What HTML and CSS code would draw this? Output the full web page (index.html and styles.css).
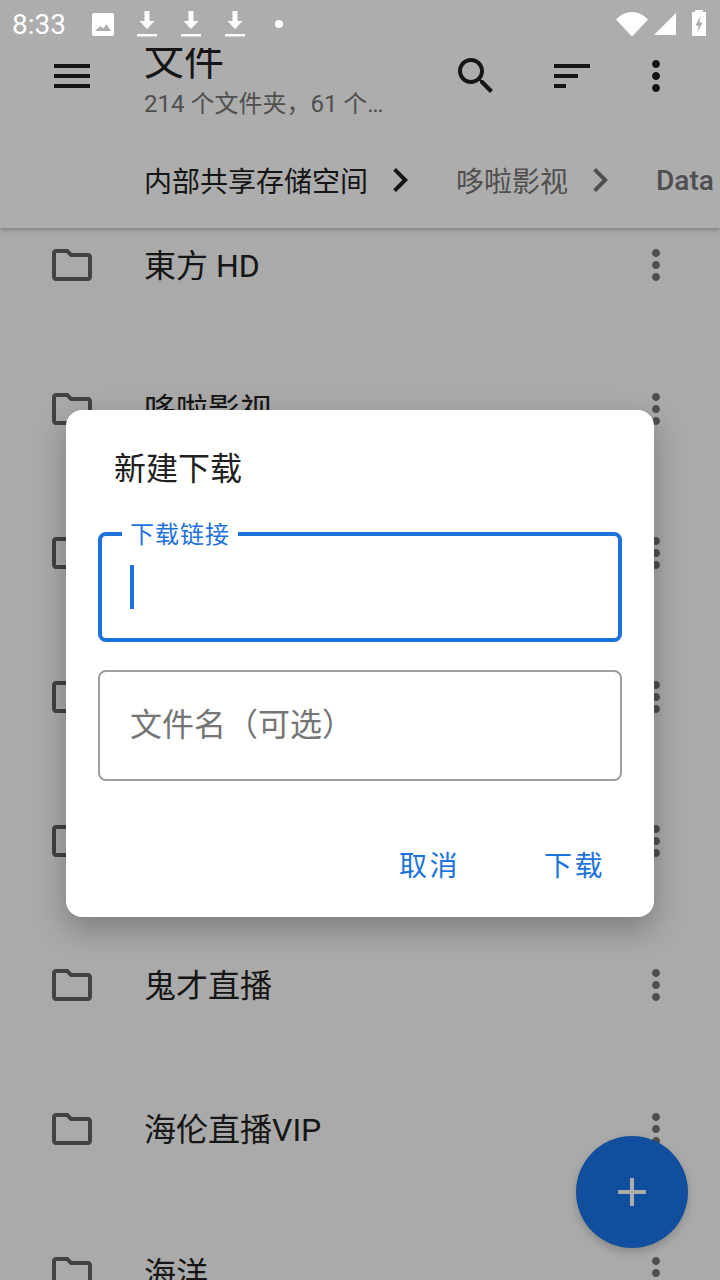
FILE: index.html
```html
<!DOCTYPE html>
<html lang="zh-CN">
<head>
    <meta charset="UTF-8">
    <meta name="viewport" content="width=device-width, initial-scale=1.0">
    <title>文件</title>
    <link rel="stylesheet" href="styles.css">
</head>
<body>
    <div class="phone">
        <div class="status-bar">
            <span class="time">8:33</span>
            <svg class="stat-image" width="22" height="23" viewBox="0 0 22 23"><path fill-rule="evenodd" fill="#fff" d="M2 0h18a2 2 0 0 1 2 2v19a2 2 0 0 1-2 2H2a2 2 0 0 1-2-2V2a2 2 0 0 1 2-2zM3 18h16l-4.500-6.500-3.500 4-2.500-2.500z"/></svg>
            <svg class="stat-dl" width="20" height="26" viewBox="0 0 20 26"><path fill="#fff" d="M7.500 0h5v10h5l-7.500 8-7.500-8h5zM0 23h20v2.500H0z"/></svg>
            <svg class="stat-dl" width="20" height="26" viewBox="0 0 20 26"><path fill="#fff" d="M7.500 0h5v10h5l-7.500 8-7.500-8h5zM0 23h20v2.500H0z"/></svg>
            <svg class="stat-dl" width="20" height="26" viewBox="0 0 20 26"><path fill="#fff" d="M7.500 0h5v10h5l-7.500 8-7.500-8h5zM0 23h20v2.500H0z"/></svg>
            <span class="stat-dot"></span>
            <div class="status-right">
                <svg width="32" height="24" viewBox="0 0 32 24"><path fill="#fff" d="M0 7.500C4 3 10 0 16 0s12 3 16 7.500L17.500 23a2 2 0 0 1-3 0z"/></svg>
                <svg width="22" height="22" viewBox="0 0 22 22"><path fill="#fff" d="M22 0v22H0z"/></svg>
                <svg class="stat-battery" width="14" height="26" viewBox="0 0 14 26"><path fill-rule="evenodd" fill="#fff" d="M3 0h8v2h3v24H0V2h3zM8.500 6 3.500 15.500h3L5.500 22 10.500 12.500H7.500z"/></svg>
            </div>
        </div>

        <header class="app-bar">
            <div class="toolbar">
                <svg class="icon" viewBox="0 0 24 24"><path d="M3 18h18v-2H3v2zm0-5h18v-2H3v2zm0-7v2h18V6H3z"/></svg>
                <div class="titles">
                    <div class="title">文件</div>
                    <div class="subtitle">214 个文件夹，61 个文件</div>
                </div>
                <svg class="icon" viewBox="0 0 24 24"><path d="M15.500 14h-.79l-.28-.27C15.410 12.590 16 11.110 16 9.500 16 5.910 13.090 3 9.500 3S3 5.910 3 9.500 5.910 16 9.500 16c1.610 0 3.090-.59 4.230-1.570l.27.28v.79l5 4.990L20.490 19l-4.990-5zm-6 0C7.010 14 5 11.990 5 9.500S7.010 5 9.500 5 14 7.010 14 9.500 11.990 14 9.500 14z"/></svg>
                <svg class="icon" viewBox="0 0 24 24"><path d="M3 18h6v-2H3v2zM3 6v2h18V6H3zm0 7h12v-2H3v2z"/></svg>
                <svg class="icon" viewBox="0 0 24 24"><path d="M12 8c1.100 0 2-.9 2-2s-.9-2-2-2-2 .9-2 2 .9 2 2 2zm0 2c-1.100 0-2 .9-2 2s.9 2 2 2 2-.9 2-2-.9-2-2-2zm0 6c-1.100 0-2 .9-2 2s.9 2 2 2 2-.9 2-2-.9-2-2-2z"/></svg>
            </div>
            <div class="crumbs">
                <span class="crumb current">内部共享存储空间</span>
                <svg class="icon" viewBox="0 0 24 24"><path d="M10 6L8.590 7.410 13.170 12l-4.580 4.590L10 18l6-6z"/></svg>
                <span class="crumb">哆啦影视</span>
                <svg class="icon dim" viewBox="0 0 24 24"><path d="M10 6L8.590 7.410 13.170 12l-4.580 4.590L10 18l6-6z"/></svg>
                <span class="crumb latin">Data</span>
            </div>
        </header>

        <main class="file-list">
            <div class="file-row"><svg class="icon folder" viewBox="0 0 24 24"><path d="M9.170 6l2 2H20v10H4V6h5.170M10 4H4c-1.100 0-1.990.9-1.990 2L2 18c0 1.100.9 2 2 2h16c1.100 0 2-.9 2-2V8c0-1.100-.9-2-2-2h-8l-2-2z"/></svg><span class="file-name">東方 HD</span><svg class="icon more" viewBox="0 0 24 24"><path d="M12 8c1.100 0 2-.9 2-2s-.9-2-2-2-2 .9-2 2 .9 2 2 2zm0 2c-1.100 0-2 .9-2 2s.9 2 2 2 2-.9 2-2-.9-2-2-2zm0 6c-1.100 0-2 .9-2 2s.9 2 2 2 2-.9 2-2-.9-2-2-2z"/></svg></div>
            <div class="file-row"><svg class="icon folder" viewBox="0 0 24 24"><path d="M9.170 6l2 2H20v10H4V6h5.170M10 4H4c-1.100 0-1.990.9-1.990 2L2 18c0 1.100.9 2 2 2h16c1.100 0 2-.9 2-2V8c0-1.100-.9-2-2-2h-8l-2-2z"/></svg><span class="file-name">哆啦影视</span><svg class="icon more" viewBox="0 0 24 24"><path d="M12 8c1.100 0 2-.9 2-2s-.9-2-2-2-2 .9-2 2 .9 2 2 2zm0 2c-1.100 0-2 .9-2 2s.9 2 2 2 2-.9 2-2-.9-2-2-2zm0 6c-1.100 0-2 .9-2 2s.9 2 2 2 2-.9 2-2-.9-2-2-2z"/></svg></div>
            <div class="file-row"><svg class="icon folder" viewBox="0 0 24 24"><path d="M9.170 6l2 2H20v10H4V6h5.170M10 4H4c-1.100 0-1.990.9-1.990 2L2 18c0 1.100.9 2 2 2h16c1.100 0 2-.9 2-2V8c0-1.100-.9-2-2-2h-8l-2-2z"/></svg><span class="file-name"></span><svg class="icon more" viewBox="0 0 24 24"><path d="M12 8c1.100 0 2-.9 2-2s-.9-2-2-2-2 .9-2 2 .9 2 2 2zm0 2c-1.100 0-2 .9-2 2s.9 2 2 2 2-.9 2-2-.9-2-2-2zm0 6c-1.100 0-2 .9-2 2s.9 2 2 2 2-.9 2-2-.9-2-2-2z"/></svg></div>
            <div class="file-row"><svg class="icon folder" viewBox="0 0 24 24"><path d="M9.170 6l2 2H20v10H4V6h5.170M10 4H4c-1.100 0-1.990.9-1.990 2L2 18c0 1.100.9 2 2 2h16c1.100 0 2-.9 2-2V8c0-1.100-.9-2-2-2h-8l-2-2z"/></svg><span class="file-name"></span><svg class="icon more" viewBox="0 0 24 24"><path d="M12 8c1.100 0 2-.9 2-2s-.9-2-2-2-2 .9-2 2 .9 2 2 2zm0 2c-1.100 0-2 .9-2 2s.9 2 2 2 2-.9 2-2-.9-2-2-2zm0 6c-1.100 0-2 .9-2 2s.9 2 2 2 2-.9 2-2-.9-2-2-2z"/></svg></div>
            <div class="file-row"><svg class="icon folder" viewBox="0 0 24 24"><path d="M9.170 6l2 2H20v10H4V6h5.170M10 4H4c-1.100 0-1.990.9-1.990 2L2 18c0 1.100.9 2 2 2h16c1.100 0 2-.9 2-2V8c0-1.100-.9-2-2-2h-8l-2-2z"/></svg><span class="file-name"></span><svg class="icon more" viewBox="0 0 24 24"><path d="M12 8c1.100 0 2-.9 2-2s-.9-2-2-2-2 .9-2 2 .9 2 2 2zm0 2c-1.100 0-2 .9-2 2s.9 2 2 2 2-.9 2-2-.9-2-2-2zm0 6c-1.100 0-2 .9-2 2s.9 2 2 2 2-.9 2-2-.9-2-2-2z"/></svg></div>
            <div class="file-row"><svg class="icon folder" viewBox="0 0 24 24"><path d="M9.170 6l2 2H20v10H4V6h5.170M10 4H4c-1.100 0-1.990.9-1.990 2L2 18c0 1.100.9 2 2 2h16c1.100 0 2-.9 2-2V8c0-1.100-.9-2-2-2h-8l-2-2z"/></svg><span class="file-name">鬼才直播</span><svg class="icon more" viewBox="0 0 24 24"><path d="M12 8c1.100 0 2-.9 2-2s-.9-2-2-2-2 .9-2 2 .9 2 2 2zm0 2c-1.100 0-2 .9-2 2s.9 2 2 2 2-.9 2-2-.9-2-2-2zm0 6c-1.100 0-2 .9-2 2s.9 2 2 2 2-.9 2-2-.9-2-2-2z"/></svg></div>
            <div class="file-row"><svg class="icon folder" viewBox="0 0 24 24"><path d="M9.170 6l2 2H20v10H4V6h5.170M10 4H4c-1.100 0-1.990.9-1.990 2L2 18c0 1.100.9 2 2 2h16c1.100 0 2-.9 2-2V8c0-1.100-.9-2-2-2h-8l-2-2z"/></svg><span class="file-name">海伦直播VIP</span><svg class="icon more" viewBox="0 0 24 24"><path d="M12 8c1.100 0 2-.9 2-2s-.9-2-2-2-2 .9-2 2 .9 2 2 2zm0 2c-1.100 0-2 .9-2 2s.9 2 2 2 2-.9 2-2-.9-2-2-2zm0 6c-1.100 0-2 .9-2 2s.9 2 2 2 2-.9 2-2-.9-2-2-2z"/></svg></div>
            <div class="file-row"><svg class="icon folder" viewBox="0 0 24 24"><path d="M9.170 6l2 2H20v10H4V6h5.170M10 4H4c-1.100 0-1.990.9-1.990 2L2 18c0 1.100.9 2 2 2h16c1.100 0 2-.9 2-2V8c0-1.100-.9-2-2-2h-8l-2-2z"/></svg><span class="file-name">海洋</span><svg class="icon more" viewBox="0 0 24 24"><path d="M12 8c1.100 0 2-.9 2-2s-.9-2-2-2-2 .9-2 2 .9 2 2 2zm0 2c-1.100 0-2 .9-2 2s.9 2 2 2 2-.9 2-2-.9-2-2-2zm0 6c-1.100 0-2 .9-2 2s.9 2 2 2 2-.9 2-2-.9-2-2-2z"/></svg></div>
        </main>

        <button class="fab"><svg class="icon" viewBox="0 0 24 24"><path d="M19 13h-6v6h-2v-6H5v-2h6V5h2v6h6v2z"/></svg></button>

        <div class="scrim">
            <div class="dialog">
                <h2 class="dialog-title">新建下载</h2>
                <div class="field focused">
                    <span class="field-label">下载链接</span>
                    <span class="caret"></span>
                </div>
                <div class="field">
                    <span class="placeholder">文件名（可选）</span>
                </div>
                <div class="dialog-actions">
                    <button class="text-btn">取消</button>
                    <button class="text-btn">下载</button>
                </div>
            </div>
        </div>
    </div>
</body>
</html>
```

FILE: styles.css
```css
* {
    box-sizing: border-box;
}
body {
    margin: 0;
    font-family: Roboto, "Noto Sans CJK SC", sans-serif;
    color: #212121;
}
.phone {
    position: relative;
    width: 720px;
    height: 1280px;
    overflow: hidden;
    background-color: #fbfbfb;
}
.icon {
    width: 48px;
    height: 48px;
    flex: none;
    fill: #212121;
}

/* status bar sits above the scrim */
.status-bar {
    position: absolute;
    top: 0;
    left: 0;
    z-index: 5;
    width: 720px;
    height: 48px;
    display: flex;
    align-items: center;
    padding-left: 12px;
    background-color: #adadad;
}
.time {
    width: 80px;
    font-size: 28px;
    color: #fff;
}
.stat-image {
    margin-top: 1px;
}
.stat-dl {
    margin-left: 23px;
}
.stat-dl + .stat-dl {
    margin-left: 24px;
}
.stat-dot {
    width: 8px;
    height: 8px;
    margin-left: 30px;
    border-radius: 50%;
    background-color: #fff;
}
.status-right {
    margin-left: auto;
    padding-right: 14px;
    display: flex;
    align-items: center;
    gap: 6px;
}
.stat-battery {
    margin-left: 10px;
    margin-top: -2px;
}

.app-bar {
    position: relative;
    z-index: 2;
    height: 228px;
    padding-top: 52px;
    background-color: #fff;
    box-shadow: 0 2px 4px rgba(0, 0, 0, 0.25);
}
.toolbar {
    display: flex;
    align-items: center;
    height: 48px;
    padding-left: 48px;
}
.toolbar .icon:nth-of-type(3) {
    margin-left: 48px;
}
.toolbar .icon:nth-of-type(4) {
    margin-left: 36px;
}
.titles {
    width: 240px;
    margin-left: 48px;
    margin-right: 68px;
    padding-top: 4px;
}
.title {
    font-size: 40px;
    line-height: 52px;
}
.subtitle {
    font-size: 24px;
    line-height: 32px;
    color: #757575;
    white-space: nowrap;
    overflow: hidden;
    text-overflow: ellipsis;
}
.crumbs {
    display: flex;
    align-items: center;
    height: 48px;
    margin-top: 56px;
    padding-left: 144px;
    white-space: nowrap;
}
.crumb {
    font-size: 28px;
    color: #757575;
}
.crumb.current {
    color: #212121;
}
.crumbs .icon {
    margin-left: 8px;
    margin-right: 32px;
}
.crumbs .icon.dim {
    fill: #757575;
}
.crumb.latin {
    font-weight: 500;
}

.file-list {
    margin-top: -35px;
}
.file-row {
    display: flex;
    align-items: center;
    height: 144px;
    padding-left: 48px;
}
.file-row .folder {
    fill: #5f6368;
}
.file-row .more {
    fill: #757575;
    margin-left: auto;
    margin-right: 40px;
}
.file-name {
    margin-left: 48px;
    padding-bottom: 4px;
    font-size: 32px;
}

.fab {
    position: absolute;
    left: 576px;
    top: 1136px;
    width: 112px;
    height: 112px;
    padding: 32px;
    border: none;
    border-radius: 50%;
    background-color: #1a73e8;
    box-shadow: 0 4px 10px rgba(0, 0, 0, 0.2);
}
.fab .icon {
    display: block;
    fill: #fff;
}

.scrim {
    position: absolute;
    inset: 0;
    z-index: 3;
    background-color: rgba(0, 0, 0, 0.32);
}
.dialog {
    position: absolute;
    left: 66px;
    top: 410px;
    width: 588px;
    height: 507px;
    padding: 32px;
    border-radius: 16px;
    background-color: #fff;
    box-shadow: 0 12px 32px rgba(0, 0, 0, 0.28);
}
.dialog-title {
    margin: 8px 0 44px 16px;
    font-size: 32px;
    line-height: 38px;
    font-weight: 400;
}
.field {
    position: relative;
    display: flex;
    align-items: center;
    height: 111px;
    margin-bottom: 28px;
    padding-left: 30px;
    padding-bottom: 8px;
    border: 2px solid #9e9e9e;
    border-radius: 8px;
}
.field.focused {
    height: 110px;
    padding-left: 28px;
    padding-bottom: 0;
    border: 4px solid #1c73de;
}
.field-label {
    position: absolute;
    left: 20px;
    top: -17px;
    padding: 0 8px;
    font-size: 24px;
    line-height: 32px;
    letter-spacing: 1px;
    color: #1c73de;
    background-color: #fff;
}
.caret {
    width: 4px;
    height: 44px;
    background-color: #1c73de;
}
.placeholder {
    font-size: 32px;
    color: #757575;
}
.dialog-actions {
    display: flex;
    justify-content: flex-end;
    margin-top: 66px;
}
.text-btn {
    margin-right: 17px;
    padding: 0;
    border: none;
    background: none;
    font-family: inherit;
    font-size: 28px;
    line-height: 40px;
    letter-spacing: 2.5px;
    color: #1c73de;
}
.text-btn + .text-btn {
    margin-left: 84px;
}
.text-btn:first-child {
    margin-right: 0;
}
```
